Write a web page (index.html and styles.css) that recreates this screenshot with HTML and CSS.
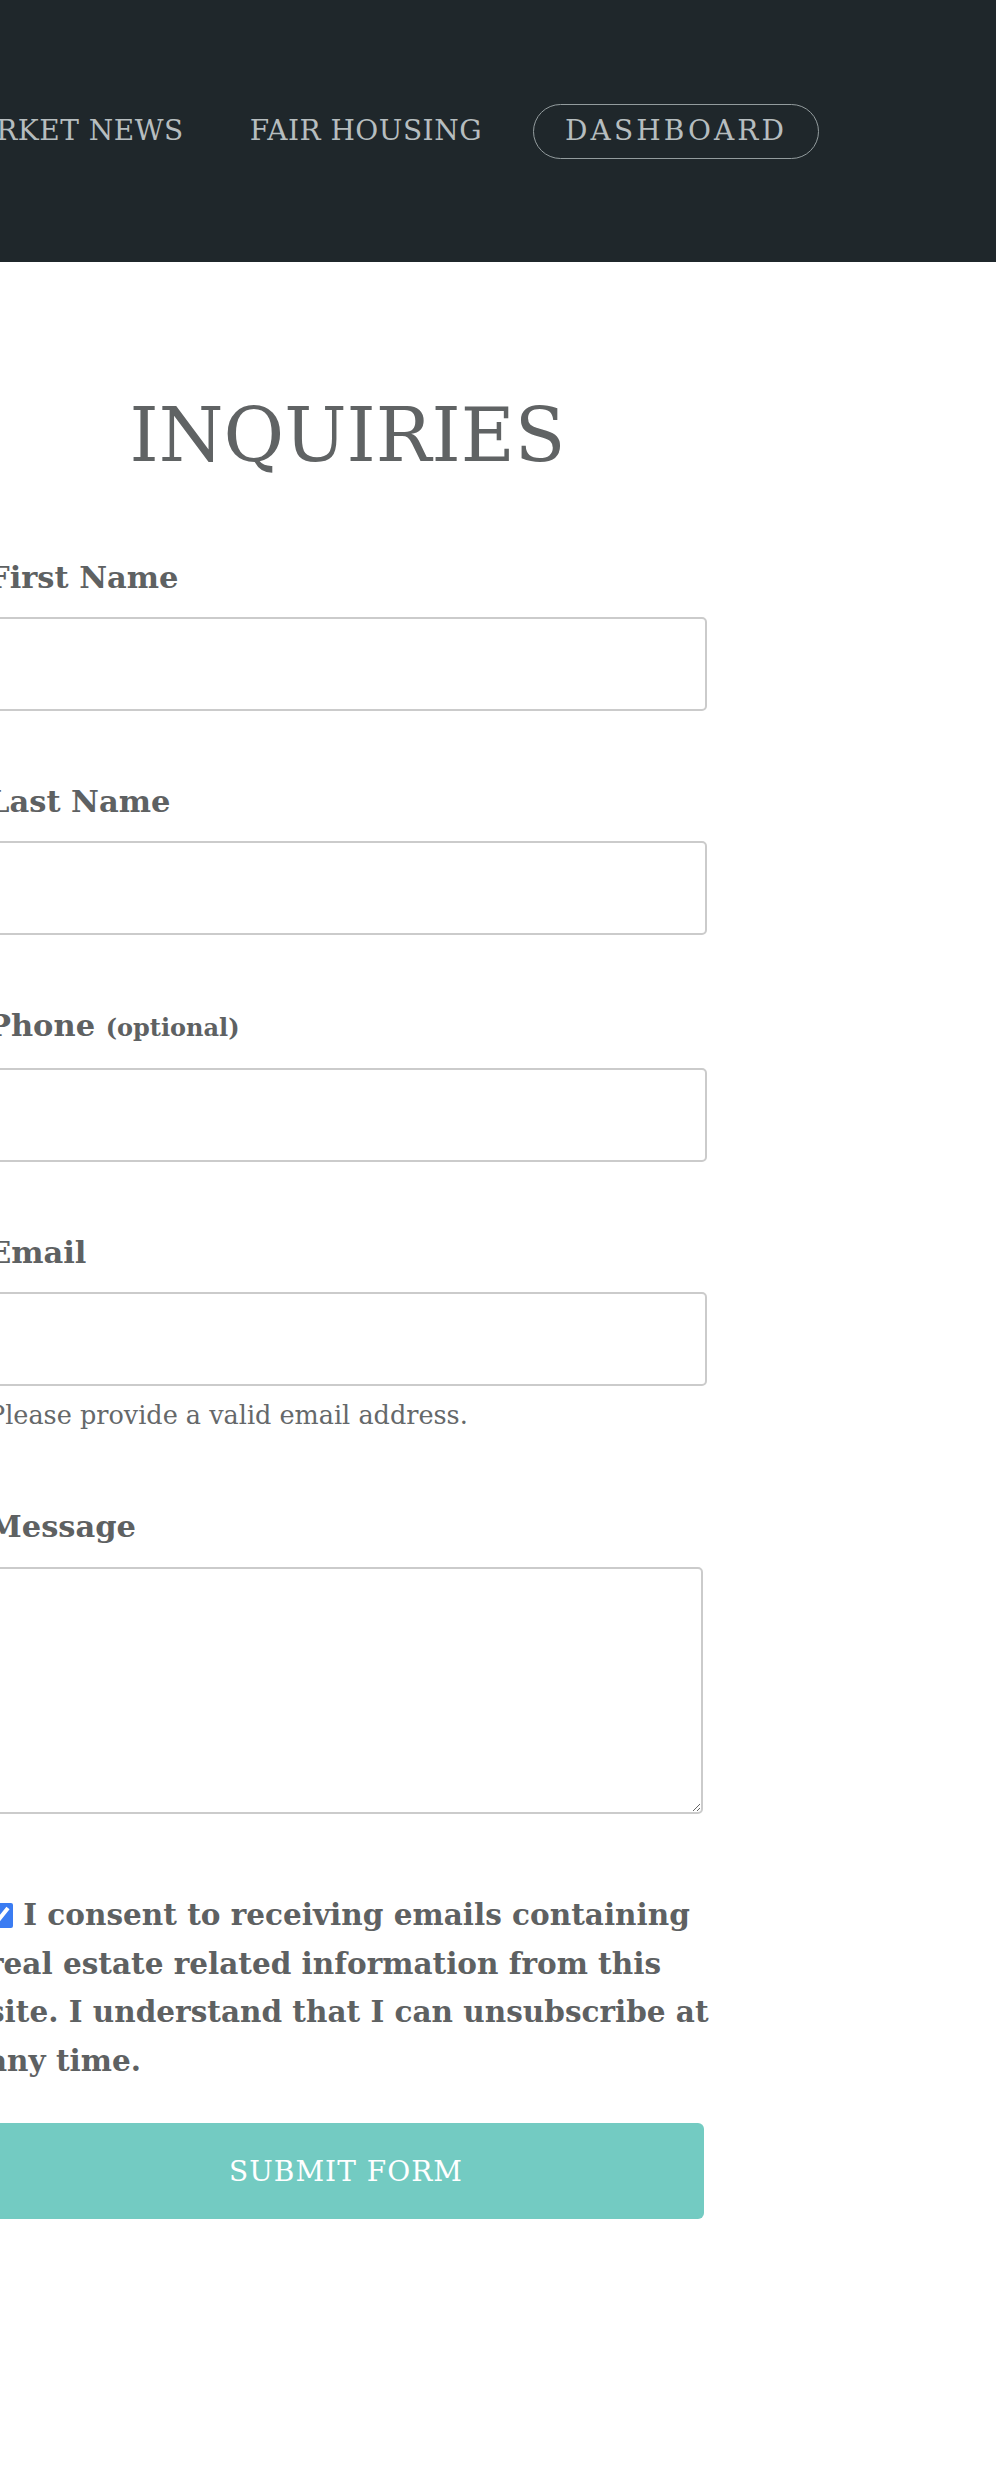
FILE: index.html
```html
<!DOCTYPE html>
<html lang="en">
<head>
<meta charset="utf-8">
<title>Inquiries</title>
<link rel="stylesheet" href="styles.css">
</head>
<body>
<header class="site-header">
  <nav class="main-nav">
    <a class="nav-link" href="#">MARKET NEWS</a>
    <a class="nav-link nav-fair" href="#">FAIR HOUSING</a>
    <a class="nav-pill" href="#">DASHBOARD</a>
  </nav>
</header>
<main class="page">
  <section class="inquiry">
    <h1 class="title">INQUIRIES</h1>
    <form class="form">
      <div class="group">
        <label class="label" for="fn">First Name</label>
        <input class="field" id="fn" type="text">
      </div>
      <div class="group">
        <label class="label" for="ln">Last Name</label>
        <input class="field" id="ln" type="text">
      </div>
      <div class="group">
        <label class="label" for="ph">Phone <span class="optional">(optional)</span></label>
        <input class="field" id="ph" type="tel">
      </div>
      <div class="group group-email">
        <label class="label" for="em">Email</label>
        <input class="field" id="em" type="email">
        <p class="help">Please provide a valid email address.</p>
      </div>
      <div class="group group-message">
        <label class="label" for="msg">Message</label>
        <textarea class="area" id="msg"></textarea>
      </div>
      <p class="consent"><input class="check" type="checkbox" checked> I consent to receiving emails containing<br>real estate related information from this<br>site. I understand that I can unsubscribe at<br>any time.</p>
      <button class="submit" type="button">SUBMIT FORM</button>
    </form>
  </section>
</main>
</body>
</html>
```
FILE: styles.css
```css
html, body {
  margin: 0;
  padding: 0;
  background: #ffffff;
}
body {
  font-family: "DejaVu Serif", "Liberation Serif", serif;
  color: #5e6162;
  overflow-x: hidden;
}
.site-header {
  height: 262px;
  background: #1f272b;
  display: flex;
  align-items: center;
  justify-content: flex-end;
  padding-right: 177px;
}
.main-nav {
  display: flex;
  align-items: center;
  justify-content: flex-end;
  white-space: nowrap;
}
.nav-link, .nav-pill {
  font-size: 28px;
  letter-spacing: 0.5px;
  color: #b6bdbf;
  text-decoration: none;
  line-height: 1;
}
.nav-fair {
  margin-left: 66px;
}
.nav-pill {
  margin-left: 51px;
  letter-spacing: 3.1px;
  border: 1.5px solid #939c9e;
  border-radius: 28px;
  padding: 0 31px 0 31px;
  box-sizing: border-box;
  height: 55px;
  display: flex;
  align-items: center;
}
.page {
  width: 719px;
  margin-left: -12px;
}
.title {
  margin: 129px 0 0;
  font-size: 74px;
  line-height: 88px;
  font-weight: normal;
  text-align: center;
  color: #606364;
}
.form {
  margin-top: 74px;
}
.group {
  margin-bottom: 66px;
}
.group-email {
  margin-bottom: 69px;
}
.label {
  display: block;
  font-size: 30.5px;
  line-height: 48px;
  font-weight: bold;
  color: #5e6162;
}
.optional {
  font-size: 24px;
  font-weight: bold;
}
.field {
  display: block;
  box-sizing: border-box;
  width: 100%;
  height: 94px;
  margin-top: 16px;
  border: 2px solid #cbcbcb;
  border-radius: 5px;
  background: #fff;
  font: inherit;
}
.help {
  margin: 11px 0 0;
  font-size: 25.5px;
  line-height: 36px;
  color: #65686a;
}
.group-message {
  margin-bottom: 77px;
}
.area {
  display: block;
  box-sizing: border-box;
  width: 715px;
  height: 247px;
  margin-top: 17px;
  border: 2px solid #cbcbcb;
  border-radius: 5px;
  background: #fff;
  font: inherit;
  resize: both;
}
.consent {
  margin: 0;
  font-size: 29.5px;
  line-height: 48.5px;
  font-weight: bold;
  color: #5e6162;
  white-space: nowrap;
}
.check {
  width: 25px;
  height: 25px;
  margin: 0;
  vertical-align: -3px;
  accent-color: #3b7cf2;
}
.submit {
  display: block;
  width: 716px;
  height: 96px;
  margin-top: 38px;
  border: none;
  border-radius: 6px;
  background: #73cbc2;
  color: #ffffff;
  font-family: "DejaVu Serif", "Liberation Serif", serif;
  font-size: 28px;
  letter-spacing: 1px;
}
```
